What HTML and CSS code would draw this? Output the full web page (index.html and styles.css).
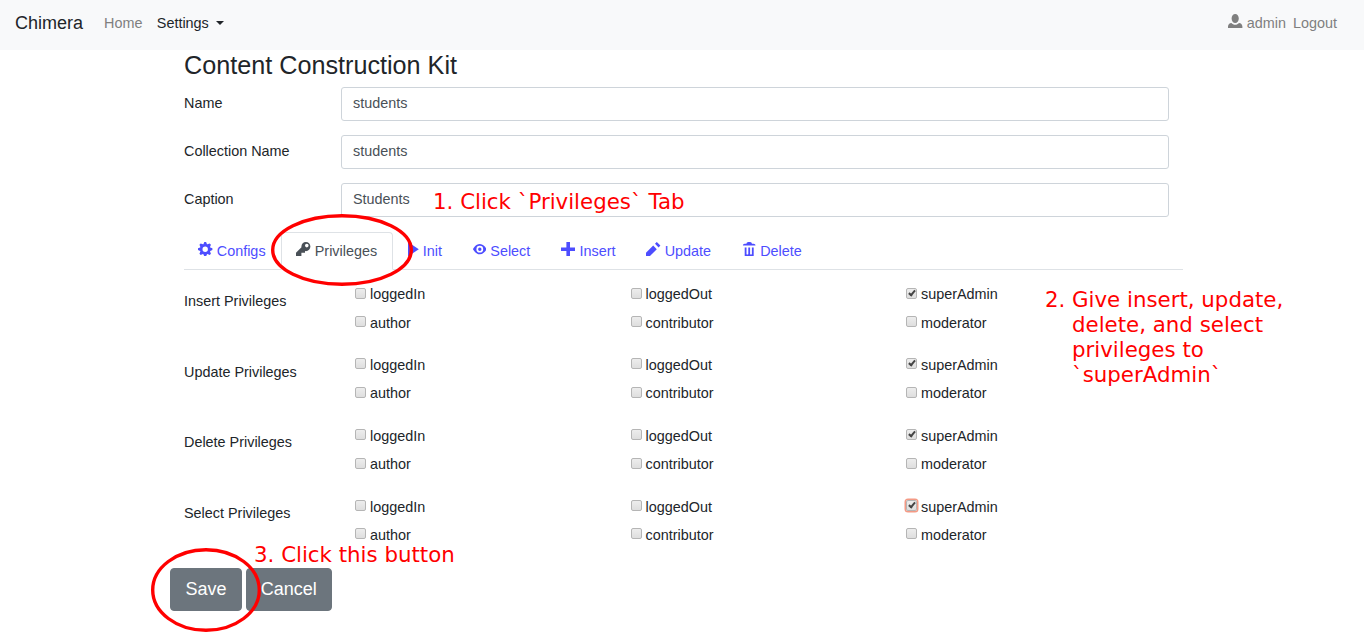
FILE: index.html
```html
<!DOCTYPE html>
<html lang="en">
<head>
    <meta charset="UTF-8">
    <title>Chimera</title>
    <link rel="stylesheet" href="styles.css">
</head>
<body>
    <nav class="navbar">
        <a class="brand">Chimera</a>
        <a class="nav-link">Home</a>
        <a class="nav-link active">Settings <span class="caret"></span></a>
        <div class="nav-right">
            <span class="nav-user">
                <svg class="icon" viewBox="0 0 8 8"><path d="M4 0C2.9 0 2 1.1 2 2.5S2.9 5 4 5s2-1.1 2-2.5S5.100 0 4 0zM1.900 5C.85 5.050 0 5.900 0 7v1h8V7c0-1.100-.84-1.950-1.910-2-.54.610-1.280 1-2.090 1s-1.550-.39-2.100-1z"/></svg>
                admin
            </span>
            <a class="nav-link logout">Logout</a>
        </div>
    </nav>

    <main class="content">
        <h1>Content Construction Kit</h1>

        <div class="form-row">
            <label>Name</label>
            <input class="form-control" type="text" value="students">
        </div>
        <div class="form-row">
            <label>Collection Name</label>
            <input class="form-control" type="text" value="students">
        </div>
        <div class="form-row">
            <label>Caption</label>
            <input class="form-control" type="text" value="Students">
        </div>

        <ul class="tabs">
            <li class="tab"><svg class="icon" viewBox="0 0 8 8"><path d="M3.500 0l-.5 1.190-.29.120L1.500.810l-.69.690.5 1.220-.12.280L0 3.500v1l1.190.5.120.28-.5 1.220.69.690 1.220-.5.280.12.500 1.190h1l.5-1.190.28-.12 1.220.5.690-.69-.5-1.220.12-.28L8 4.500v-1l-1.190-.5-.12-.28.5-1.220-.69-.69-1.220.5-.28-.12L4.500 0h-1zM4 2.500a1.500 1.500 0 1 1 0 3 1.500 1.500 0 0 1 0-3z"/></svg> Configs</li>
            <li class="tab active"><svg class="icon" viewBox="0 0 8 8"><path d="M5.500 0C4.120 0 3 1.120 3 2.500c0 .16.020.32.050.47L0 6v2h3V6h2V5.070c.17.030.33.050.5.050C6.880 5 8 3.880 8 2.500S6.880 0 5.500 0zm.5 1a1 1 0 1 1 0 2 1 1 0 0 1 0-2z"/></svg> Privileges</li>
            <li class="tab"><svg class="icon icon-play" viewBox="0 0 6 8"><path d="M0 0v8l6-4z"/></svg> Init</li>
            <li class="tab"><svg class="icon icon-slim" viewBox="0 0 8 8"><path d="M4.030 1C1.500 1 0 4 0 4s1.500 3 4.030 3C6.500 7 8 4 8 4S6.500 1 4.030 1zM4 2a2 2 0 1 1 0 4 2 2 0 0 1 0-4zm0 1a1 1 0 1 0 0 2 1 1 0 0 0 0-2z"/></svg> Select</li>
            <li class="tab"><svg class="icon" viewBox="0 0 8 8"><path d="M3 0v3H0v2h3v3h2V5h3V3H5V0z"/></svg> Insert</li>
            <li class="tab"><svg class="icon" viewBox="0 0 8 8"><path d="M6 0L5 1l2 2 1-1zM4 2L0 6v2h2l4-4z"/></svg> Update</li>
            <li class="tab"><svg class="icon" viewBox="0 0 8 8"><path d="M3 0C2.450 0 2 .45 2 1H1c-.55 0-1 .45-1 1h7c0-.55-.45-1-1-1H5c0-.55-.45-1-1-1zM1 3v4.810c0 .11.080.19.190.19h4.620c.11 0 .19-.08.190-.19V3H5v3.500a.5.5 0 0 1-1 0V3H3v3.500a.5.5 0 0 1-1 0V3z" transform="translate(.5)"/></svg> Delete</li>
        </ul>

        <section class="priv-group">
            <label class="priv-label">Insert Privileges</label>
            <div class="priv-options">
                <label class="check"><input type="checkbox">loggedIn</label>
                <label class="check"><input type="checkbox">loggedOut</label>
                <label class="check"><input type="checkbox" checked>superAdmin</label>
                <label class="check"><input type="checkbox">author</label>
                <label class="check"><input type="checkbox">contributor</label>
                <label class="check"><input type="checkbox">moderator</label>
            </div>
        </section>
        <section class="priv-group">
            <label class="priv-label">Update Privileges</label>
            <div class="priv-options">
                <label class="check"><input type="checkbox">loggedIn</label>
                <label class="check"><input type="checkbox">loggedOut</label>
                <label class="check"><input type="checkbox" checked>superAdmin</label>
                <label class="check"><input type="checkbox">author</label>
                <label class="check"><input type="checkbox">contributor</label>
                <label class="check"><input type="checkbox">moderator</label>
            </div>
        </section>
        <section class="priv-group">
            <label class="priv-label">Delete Privileges</label>
            <div class="priv-options">
                <label class="check"><input type="checkbox">loggedIn</label>
                <label class="check"><input type="checkbox">loggedOut</label>
                <label class="check"><input type="checkbox" checked>superAdmin</label>
                <label class="check"><input type="checkbox">author</label>
                <label class="check"><input type="checkbox">contributor</label>
                <label class="check"><input type="checkbox">moderator</label>
            </div>
        </section>
        <section class="priv-group">
            <label class="priv-label">Select Privileges</label>
            <div class="priv-options">
                <label class="check"><input type="checkbox">loggedIn</label>
                <label class="check"><input type="checkbox">loggedOut</label>
                <label class="check"><input class="focused" type="checkbox" checked>superAdmin</label>
                <label class="check"><input type="checkbox">author</label>
                <label class="check"><input type="checkbox">contributor</label>
                <label class="check"><input type="checkbox">moderator</label>
            </div>
        </section>

        <div class="actions">
            <button class="btn">Save</button>
            <button class="btn btn-cancel">Cancel</button>
        </div>
    </main>

    <!-- annotations drawn on top of the screenshot -->
    <div class="note note-1">1. Click `Privileges` Tab</div>
    <div class="note note-2">Give insert, update,<br>delete, and select<br>privileges to<br>`superAdmin`</div>
    <div class="note note-3">3. Click this button</div>
    <svg class="ring ring-1" viewBox="0 0 142 72"><ellipse cx="71" cy="36" rx="69.300" ry="34.300"/></svg>
    <svg class="ring ring-2" viewBox="0 0 110 84"><ellipse cx="55" cy="42" rx="53.300" ry="40.300"/></svg>
</body>
</html>
```

FILE: styles.css
```css
body {
    font-family: "Liberation Sans", Arial, sans-serif;
    font-size: 14.4px;
    line-height: 21.6px;
    color: #212529;
    background: #ffffff;
    margin: 0;
}

.icon {
    width: 14.4px;
    height: 14.4px;
    fill: currentColor;
    vertical-align: 0;
}

.icon-play {
    width: 10.8px;
}

.icon-slim {
    width: 13.6px;
}

/* navbar */
.navbar {
    display: flex;
    align-items: center;
    height: 50px;
    padding: 0 27px 2px 15px;
    box-sizing: border-box;
    background: #f8f9fa;
}

.brand {
    font-size: 18px;
    color: #212529;
    margin-right: 21px;
}

.nav-link {
    color: #7f7f7f;
    margin-right: 14.4px;
}

.nav-link.active {
    color: #212529;
}

.caret {
    display: inline-block;
    margin-left: 3px;
    vertical-align: 3px;
    border-top: 4px solid #212529;
    border-left: 4px solid transparent;
    border-right: 4px solid transparent;
}

.nav-right {
    display: flex;
    align-items: center;
    margin-left: auto;
}

.nav-user {
    color: #7f7f7f;
    margin-right: 7px;
}

.nav-link.logout {
    margin-right: 0;
}

/* main form */
.content {
    width: 999px;
    margin-left: 184px;
}

h1 {
    font-size: 25.2px;
    font-weight: 400;
    line-height: 30px;
    margin: 0 0 8px;
    height: 29px;
}

.form-row {
    display: flex;
    align-items: center;
    margin-bottom: 14px;
}

.form-row label {
    width: 157px;
}

.form-control {
    width: 828px;
    height: 34px;
    box-sizing: border-box;
    padding: 0 11px 2px;
    font: inherit;
    color: #495057;
    border: 1px solid #ced4da;
    border-radius: 3px;
}

/* tabs */
.tabs {
    display: flex;
    list-style: none;
    height: 38px;
    box-sizing: border-box;
    margin: 15px 0 0;
    padding: 0;
    border-bottom: 1px solid #dee2e6;
}

.tab {
    height: 38px;
    box-sizing: border-box;
    padding: 8px 14.4px 0;
    border: 1px solid transparent;
    color: #4d4dff;
}

.tab:first-child {
    margin-left: -1px;
}

.tab.active {
    color: #495057;
    background: #fff;
    border-color: #dee2e6 #dee2e6 #fff;
    border-radius: 4px 4px 0 0;
}

/* privileges */
.priv-group {
    display: flex;
    margin-bottom: 14px;
}

.tabs + .priv-group {
    margin-top: 10.2px;
}

.priv-label {
    width: 171px;
    padding-top: 10.7px;
}

.priv-options {
    display: grid;
    grid-template-columns: repeat(3, 275.5px);
    grid-auto-rows: 28.4px;
    align-items: start;
}

.check {
    display: flex;
    align-items: flex-start;
    padding-top: 4px;
}

.check input {
    appearance: none;
    position: relative;
    width: 9px;
    height: 9px;
    margin: 3.4px 3.6px 0 .4px;
    box-sizing: content-box;
    border: 1px solid #b5b5b5;
    border-radius: 2px;
    background: linear-gradient(#ededed, #dedede);
}

.check input:checked::after {
    content: "";
    position: absolute;
    left: 3px;
    top: 0;
    width: 2px;
    height: 5px;
    border: solid #444;
    border-width: 0 2px 2px 0;
    transform: rotate(40deg);
}

.check input.focused {
    box-shadow: 0 0 0 1.5px #f49a85;
}

/* buttons */
.actions {
    display: flex;
    gap: 4px;
    margin: 18.6px 0 0 -14px;
}

.btn {
    height: 43px;
    padding: 1px 14.4px 0;
    font: inherit;
    font-size: 18px;
    color: #fff;
    background: #6c757d;
    border: 1px solid #6c757d;
    border-radius: 4px;
}

.btn-cancel {
    padding: 1px 14px 0;
}

/* annotations */
.note {
    position: absolute;
    font-family: "DejaVu Sans", sans-serif;
    font-size: 21.33px;
    line-height: 25px;
    color: #ff0000;
    white-space: nowrap;
}

.note-1 {
    left: 433px;
    top: 189px;
}

.note-2 {
    left: 1072px;
    top: 287px;
}

.note-2::before {
    content: "2.";
    position: absolute;
    left: -27px;
}

.note-3 {
    left: 254px;
    top: 542px;
}

.ring {
    position: absolute;
    fill: none;
    stroke: #ff0000;
    stroke-width: 3.4px;
}

.ring-1 {
    left: 271px;
    top: 214px;
    width: 142px;
    height: 72px;
}

.ring-2 {
    left: 151px;
    top: 548px;
    width: 110px;
    height: 84px;
}
```
